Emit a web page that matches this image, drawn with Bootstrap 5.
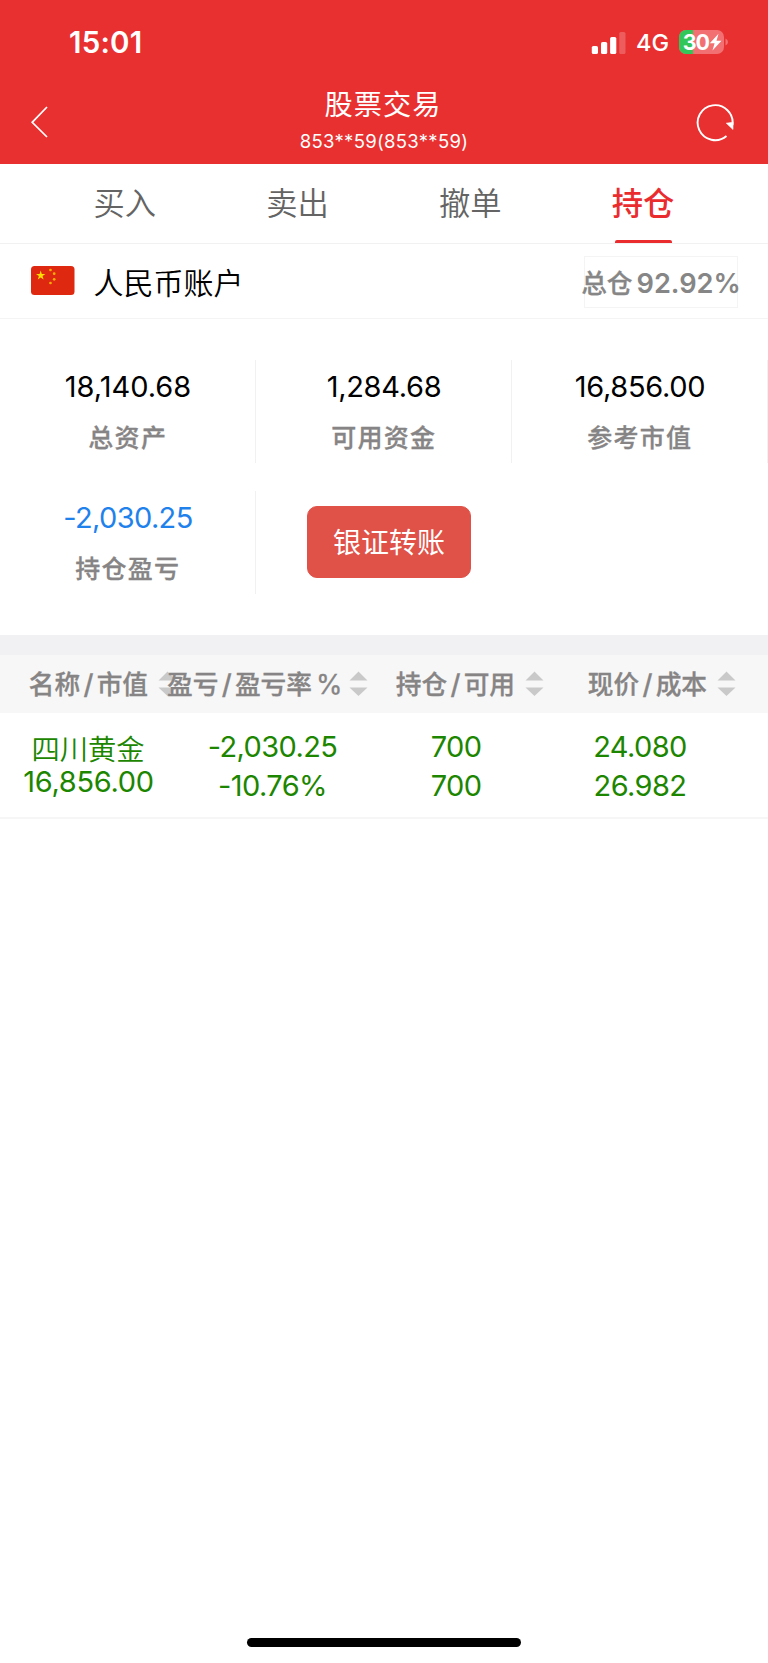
<!DOCTYPE html>
<html lang="zh-CN">
<head>
<meta charset="utf-8">
<meta name="viewport" content="width=device-width, initial-scale=1">
<title>股票交易</title>
<link href="https://cdn.jsdelivr.net/npm/bootstrap@5.3.0/dist/css/bootstrap.min.css" rel="stylesheet">
<style>
  body { font-family: Inter, "Noto Sans CJK SC", sans-serif; background: #fff; color: #000; height: 1663px; overflow: hidden; }
  svg { display: block; flex: none; }
  .top-area { background: #e93030; height: 163.5px; color: #fff; }
  .status-line { height: 84px; padding: 0 39px 0 69px; }
  .clock { font-size: 29.5px; font-weight: 600; line-height: 30px; letter-spacing: .2px; }
  .net-type { font-size: 23.5px; font-weight: 450; line-height: 30px; margin: 2px 10px 0 9.5px; }
  .title-line { height: 79px; padding: 1px 34px 0 31px; }
  .page-title { font-size: 28.2px; line-height: 38px; letter-spacing: 1px; margin-right: -1px; padding-top: .5px; }
  .acct-no { font-size: 18.5px; line-height: 24px; letter-spacing: .3px; margin: 5px -3px 0 0; }
  .tabs-line { height: 80px; padding: 0 38.5px; border-bottom: 1px solid #f1f1f1; }
  .tab-link { font-size: 31.3px; line-height: 40px; color: #646464; padding-top: 20px; font-weight: 350; }
  .tab-link.on { color: #ea2c2f; font-weight: 500; }
  .tab-link.on::after { content: ""; display: block; width: 57px; height: 3px; margin: 16.5px auto 0; background: #ea2c2f; border-radius: 2px 2px 0 0; }
  .acct-line { height: 75px; padding: 0 30px 0 31px; border-bottom: 1px solid #f4f4f4; }
  .acct-name { font-size: 30px; font-weight: 350; line-height: 40px; margin-left: 18.5px; padding-top: 4.5px; }
  .ratio-box { width: 154px; height: 52px; margin-top: 2px; border: 1.5px solid #f4f4f4; color: #868686; font-size: 27.2px; font-weight: 600; white-space: nowrap; line-height: 40px; }
  .ratio-box .zh { font-weight: 500; font-size: 25.7px; margin-right: 4px; -webkit-text-stroke: .3px; }
  .ratio-box span { padding-top: 4px; }
  .asset-grid { padding-top: 41px; height: 316.5px; row-gap: 28px; align-content: flex-start; }
  .asset-cell { height: 103px; border-right: 1px solid #f1f1f1; padding-top: 9px; }
  .asset-num { font-size: 29px; line-height: 36px; letter-spacing: -.3px; padding-left: 1px; }
  .asset-num.wide { letter-spacing: 0; }
  .asset-label { font-size: 25px; font-weight: 500; -webkit-text-stroke: .3px; line-height: 36px; letter-spacing: 1.3px; margin: 15.5px -.5px 0 0; color: #868484; }
  .loss { color: #1f82ec; letter-spacing: -.65px; }
  .btn-transfer { --bs-btn-bg: #e05147; --bs-btn-color: #fff; --bs-btn-border-color: #e05147; width: 164px; height: 72px; border-radius: 10px; padding: 3px 0 0; font-size: 28px; margin: 15px 0 0 51px; }
  .gap-band { height: 20px; background: #f1f1f3; }
  .hold-grid { display: grid; grid-template-columns: 177px 191px 176px 192px; }
  .hold-head { height: 58px; background: #f7f7f7; color: #868484; font-weight: 500; -webkit-text-stroke: .3px; font-size: 25.7px; white-space: nowrap; }
  .hold-head span { padding-top: 1px; }
  .hold-head .slash { display: inline-block; width: 16.5px; text-align: center; font-size: 27px; }
  .hold-head .pct { font-size: 27px; font-weight: 400; margin-left: 4px; }
  .hold-head svg { margin: 0 .5px 0 9.5px; }
  .hold-head .tight svg { margin-left: 6px; }
  .hold-row { height: 105.5px; border-bottom: 2px solid #f6f6f6; color: #1c8600; font-size: 29px; line-height: 39px; letter-spacing: -.6px; padding-top: 13.5px; }
  .stock-name { font-size: 28.3px; font-weight: 350; line-height: 34px; letter-spacing: 0; padding-top: 6px; margin-left: -1px; }
  .stock-val { line-height: 32px; letter-spacing: -.3px; margin-top: -.5px; }
  .home-bar { width: 274px; height: 9.5px; border-radius: 5px; background: #000; margin-bottom: 16px; }
</style>
</head>
<body class="d-flex flex-column">
<header class="top-area">
  <div class="status-line d-flex align-items-center">
    <span class="clock me-auto">15:01</span>
    <svg width="36" height="24" viewBox="0 0 36 24" fill="#fff" class="mt-1"><rect x=".8" y="14" width="6.2" height="8" rx="1.6"/><rect x="10" y="10" width="6.2" height="12" rx="1.6"/><rect x="19.100" y="5" width="6.2" height="17" rx="1.6"/><rect x="28.300" y="0" width="6.2" height="22" rx="1.6" opacity=".22"/></svg>
    <span class="net-type">4G</span>
    <svg width="50" height="24" viewBox="0 0 50 24"><defs><clipPath id="bat"><rect width="45" height="24" rx="7"/></clipPath></defs><g clip-path="url(#bat)"><rect width="45" height="24" fill="#f27072"/><rect width="14" height="24" fill="#33c75a"/></g><path d="M46.5 8.500Q49 9.500 49 12T46.500 15.500Z" fill="#f27072"/><text x="3.800" y="19.600" font-size="21.500" font-weight="700" fill="#fff" letter-spacing="-1.300">30</text><path d="M39.500 3.800L30.800 13.200h4.800L33.500 20.500 42.500 10.800h-5z" fill="#fff"/></svg>
  </div>
  <div class="title-line d-flex align-items-start justify-content-between">
    <svg width="38" height="34" viewBox="0 0 38 34" style="margin-top:20px"><path d="M16 2L1.200 17.300 16 32" fill="none" stroke="#fff" stroke-width="1.700"/></svg>
    <div class="text-center"><div class="page-title">股票交易</div><div class="acct-no">853**59(853**59)</div></div>
    <svg width="38" height="38" viewBox="0 0 38 38" style="margin-top:18.500px"><path d="M30.500 32A17.500 17.500 0 1 1 36.500 21" fill="none" stroke="#fff" stroke-width="1.900"/><path d="M30.300 19.200l6.700-1v7.300z" fill="#fff" stroke="#fff" stroke-width=".6"/></svg>
  </div>
</header>
<nav class="tabs-line row g-0 text-center">
  <div class="col tab-link">买入</div><div class="col tab-link">卖出</div><div class="col tab-link">撤单</div><div class="col tab-link on">持仓</div>
</nav>
<section class="acct-line d-flex align-items-center">
  <svg width="44" height="29" viewBox="0 0 44 29" class="mt-0"><rect width="43.500" height="29" rx="3.500" fill="#de2910"/><g fill="#ffde00"><path d="M9.700 4.500l1.100 3.400h3.600l-2.900 2.100 1.100 3.500-2.900-2.100-2.900 2.100 1.100-3.500L5 7.900h3.600z"/><g opacity=".75"><circle cx="19.500" cy="4" r="1.350"/><circle cx="23.200" cy="7.700" r="1.350"/><circle cx="23.200" cy="13.300" r="1.350"/><circle cx="19.500" cy="17" r="1.350"/></g></g></svg>
  <span class="acct-name me-auto">人民币账户</span>
  <div class="ratio-box d-flex align-items-center justify-content-center"><span class="zh">总仓</span><span>92.92%</span></div>
</section>
<section class="asset-grid row g-0 text-center">
  <div class="col-4 asset-cell"><div class="asset-num wide">18,140.68</div><div class="asset-label">总资产</div></div>
  <div class="col-4 asset-cell"><div class="asset-num">1,284.68</div><div class="asset-label">可用资金</div></div>
  <div class="col-4 asset-cell"><div class="asset-num">16,856.00</div><div class="asset-label">参考市值</div></div>
  <div class="col-4 asset-cell"><div class="asset-num loss">-2,030.25</div><div class="asset-label">持仓盈亏</div></div>
  <div class="col-4 text-start"><button class="btn btn-transfer" type="button">银证转账</button></div>
</section>
<div class="gap-band"></div>
<section>
  <div class="hold-grid hold-head">
    <div class="d-flex align-items-center justify-content-end"><span>名称<span class="slash">/</span>市值</span><svg width="19" height="26" viewBox="0 0 19 26" fill="#c9c9c9"><path d="M9.500 .5L18.500 9.500H.5zM.500 16.500h18L9.500 25z"/></svg></div>
    <div class="d-flex align-items-center justify-content-end tight"><span>盈亏<span class="slash">/</span>盈亏率<span class="pct">%</span></span><svg width="19" height="26" viewBox="0 0 19 26" fill="#c9c9c9"><path d="M9.500 .5L18.500 9.500H.5zM.500 16.500h18L9.500 25z"/></svg></div>
    <div class="d-flex align-items-center justify-content-end"><span>持仓<span class="slash">/</span>可用</span><svg width="19" height="26" viewBox="0 0 19 26" fill="#c9c9c9"><path d="M9.500 .5L18.500 9.500H.5zM.500 16.500h18L9.500 25z"/></svg></div>
    <div class="d-flex align-items-center justify-content-end"><span>现价<span class="slash">/</span>成本</span><svg width="19" height="26" viewBox="0 0 19 26" fill="#c9c9c9"><path d="M9.500 .5L18.500 9.500H.5zM.500 16.500h18L9.500 25z"/></svg></div>
  </div>
  <div class="hold-grid hold-row text-center">
    <div><div class="stock-name">四川黄金</div><div class="stock-val">16,856.00</div></div>
    <div><div>-2,030.25</div><div>-10.76%</div></div>
    <div><div>700</div><div>700</div></div>
    <div><div>24.080</div><div>26.982</div></div>
  </div>
</section>
<div class="home-bar mt-auto mx-auto"></div>
<script src="https://cdn.jsdelivr.net/npm/bootstrap@5.3.0/dist/js/bootstrap.bundle.min.js"></script>
</body>
</html>
